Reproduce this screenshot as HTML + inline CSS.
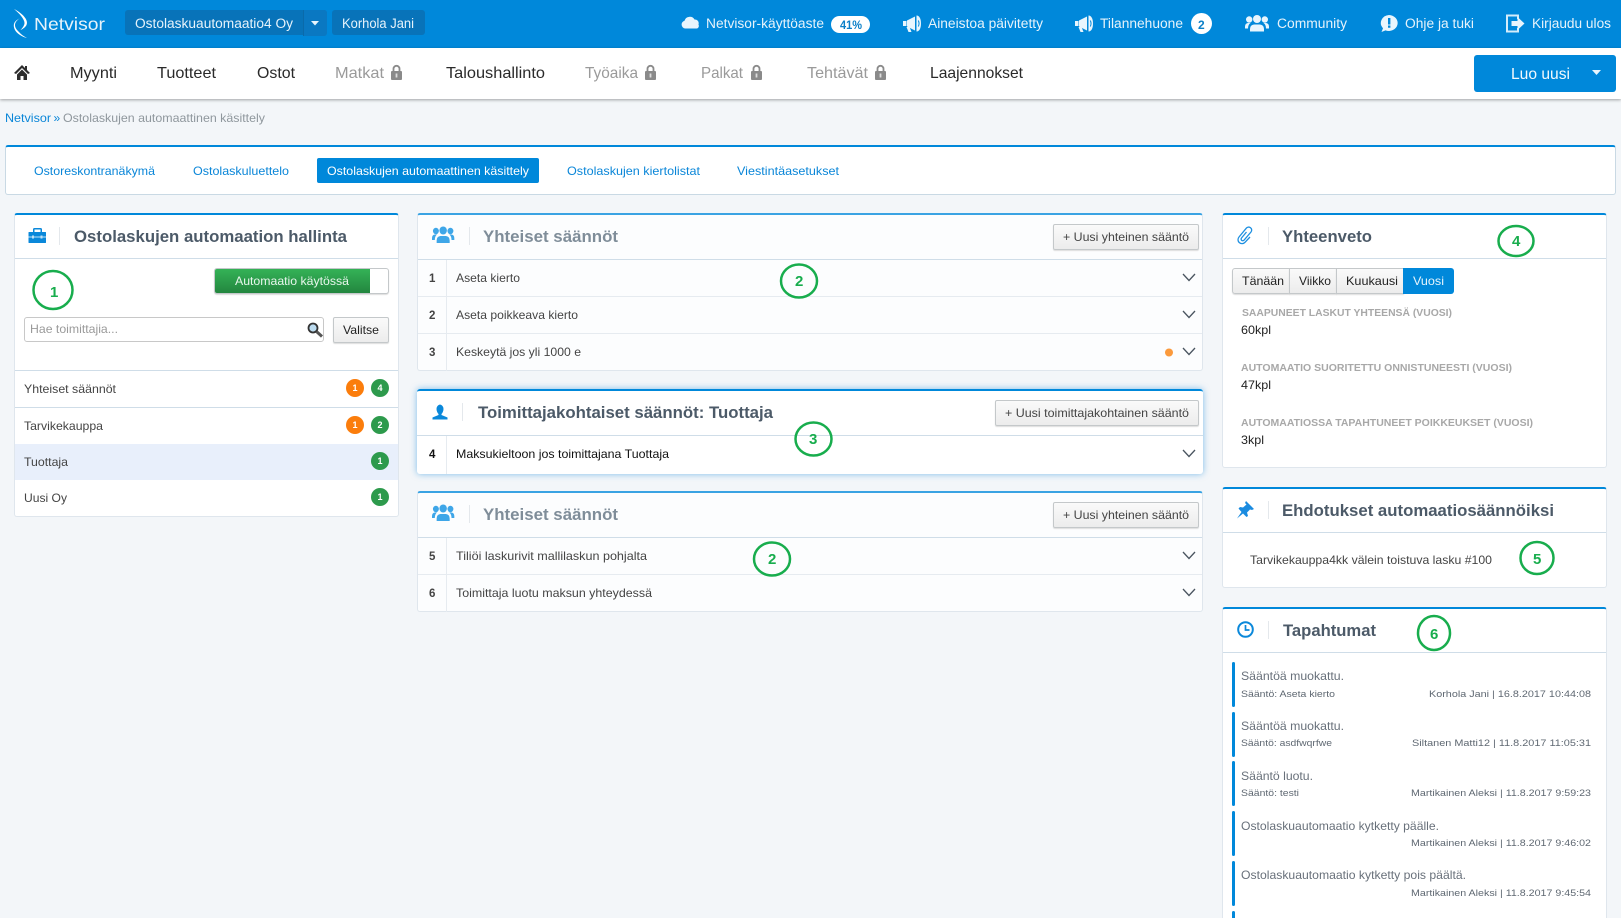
<!DOCTYPE html>
<html lang="fi"><head><meta charset="utf-8"><title>Ostolaskujen automaattinen käsittely</title>
<style>
html,body{margin:0;padding:0;width:1621px;height:918px;overflow:hidden;background:#f3f6f9}
body{position:relative;font-family:"Liberation Sans",sans-serif}
.b{position:absolute;box-sizing:border-box}
.p{background:#fff;border:1px solid #dfe6ed;border-top:2px solid #0088da;border-radius:3px}
.p2{border-top-color:#3aa3e3;background:#fcfdfe}
.hl{position:absolute;left:0;right:0;height:1px;background:#cfdde8}
.rl{position:absolute;left:0;right:0;height:1px;background:#e6ebf0}
.btn{background:linear-gradient(#fafafa,#ececec);border:1px solid #c4c8ca;border-radius:2px;box-shadow:0 1px 1px #ddd}
svg{position:absolute;left:0;top:0}
text{font-family:"Liberation Sans",sans-serif;font-size:12px;fill:#333}
.w{fill:#e6f3fb;font-size:13.5px}
.n{font-size:16px;fill:#2a2a2a}.g{font-size:16px;fill:#9a9a9a}
.t{font-size:17px;font-weight:bold;fill:#4c5a68}
.tg{font-size:17px;font-weight:bold;fill:#7f8d99}
.l{fill:#0a86d8}
.lb{font-size:10.5px;font-weight:bold;fill:#a8a8a8}
.e{fill:#68707a}.e2{font-size:9.5px;fill:#5f6872}
.c{font-size:15px;font-weight:bold;fill:#18ad4d}
.r{fill:#444}
.bw{font-size:9px;font-weight:bold;fill:#fff}
.k{fill:#222}
</style></head><body>
<div class="b" style="left:0;top:0;width:1621px;height:48px;background:#0088da"></div>
<div class="b" style="left:0;top:48px;width:1621px;height:51px;background:#fff;box-shadow:0 1px 3px rgba(0,0,0,.35)"></div>
<div class="b" style="left:125px;top:10px;width:202px;height:25px;background:#0873b9;border-radius:3px"></div>
<div class="b" style="left:303px;top:10px;width:24px;height:26px;background:#0a78c2;border-left:1px solid #0a6aaa;border-radius:0 3px 3px 0"></div>
<div class="b" style="left:332px;top:10px;width:93px;height:25px;background:#0873b9;border-radius:3px"></div>
<div class="b" style="left:831px;top:16px;width:39px;height:17px;background:#fff;border-radius:9px"></div>
<div class="b" style="left:1191px;top:13px;width:21px;height:21px;background:#fff;border-radius:50%"></div>
<div class="b" style="left:1474px;top:55px;width:142px;height:37px;background:#0088da;border-radius:3px"></div>

<div class="b" style="left:5px;top:145px;width:1611px;height:50px;background:#fff;border:1px solid #c9d9e4;border-top:2px solid #0088da;border-radius:3px"></div>
<div class="b" style="left:317px;top:158px;width:222px;height:25px;background:#0088da;border-radius:2px"></div>

<!-- left -->
<div class="b p" style="left:14px;top:213px;width:385px;height:304px">
  <div class="hl" style="top:43px"></div>
  <div class="hl" style="top:155px"></div>
  <div class="hl" style="top:192px"></div>
  <div class="b" style="left:0;right:0;top:229px;height:36px;background:#e8effb"></div>
</div>
<div class="b" style="left:214px;top:268px;width:175px;height:26px;background:#fff;border:1px solid #c4c8ca;border-radius:3px;box-shadow:0 1px 1px #ddd"></div>
<div class="b" style="left:215px;top:269px;width:155px;height:24px;background:linear-gradient(#34b257,#23863f);border-radius:2px 0 0 2px"></div>
<div class="b" style="left:24px;top:317px;width:300px;height:25px;background:#fff;border:1px solid #c8c8c8;border-radius:3px"></div>
<div class="b btn" style="left:333px;top:317px;width:56px;height:26px"></div>

<!-- middle -->
<div class="b p p2" style="left:417px;top:213px;width:786px;height:158px">
  <div class="hl" style="top:44px"></div>
  <div class="rl" style="top:81px"></div>
  <div class="rl" style="top:118px"></div>
  <div class="b" style="left:28px;top:45px;width:1px;height:111px;background:#e6ebf0"></div>
</div>
<div class="b" style="left:417px;top:389px;width:786px;height:85px;background:#fff;border-top:2px solid #0088da;border-radius:3px;box-shadow:0 0 7px rgba(30,140,220,.55)">
  <div class="hl" style="top:44px"></div>
  <div class="b" style="left:29px;top:45px;width:1px;height:38px;background:#e6ebf0"></div>
</div>
<div class="b p p2" style="left:417px;top:491px;width:786px;height:121px">
  <div class="hl" style="top:44px"></div>
  <div class="rl" style="top:81px"></div>
  <div class="b" style="left:28px;top:45px;width:1px;height:74px;background:#e6ebf0"></div>
</div>
<div class="b btn" style="left:1053px;top:224px;width:146px;height:26px"></div>
<div class="b btn" style="left:995px;top:400px;width:204px;height:26px"></div>
<div class="b btn" style="left:1053px;top:502px;width:146px;height:26px"></div>

<!-- right -->
<div class="b p" style="left:1222px;top:213px;width:385px;height:255px"><div class="hl" style="top:43px"></div></div>
<div class="b btn" style="left:1232px;top:268px;width:58px;height:26px;border-radius:3px 0 0 3px"></div>
<div class="b btn" style="left:1289px;top:268px;width:48px;height:26px;border-radius:0"></div>
<div class="b btn" style="left:1336px;top:268px;width:68px;height:26px;border-radius:0"></div>
<div class="b" style="left:1403px;top:268px;width:51px;height:26px;background:#0088da;border-radius:0 3px 3px 0"></div>
<div class="b p" style="left:1222px;top:487px;width:385px;height:101px"><div class="hl" style="top:43px"></div></div>
<div class="b p" style="left:1222px;top:607px;width:385px;height:320px"><div class="hl" style="top:43px"></div></div>
<div class="b" style="left:1232px;top:662px;width:3px;height:45px;background:#0088da;border-radius:2px"></div>
<div class="b" style="left:1232px;top:712px;width:3px;height:45px;background:#0088da;border-radius:2px"></div>
<div class="b" style="left:1232px;top:761px;width:3px;height:45px;background:#0088da;border-radius:2px"></div>
<div class="b" style="left:1232px;top:811px;width:3px;height:45px;background:#0088da;border-radius:2px"></div>
<div class="b" style="left:1232px;top:861px;width:3px;height:45px;background:#0088da;border-radius:2px"></div>
<div class="b" style="left:1232px;top:911px;width:3px;height:10px;background:#0088da;border-radius:2px"></div>

<svg width="1621" height="918" viewBox="0 0 1621 918" xmlns="http://www.w3.org/2000/svg">
<defs>
 <g id="lock"><rect x="0" y="6" width="11" height="9" rx="1" fill="#8a8a8a"/><path d="M2.5 6V3.8a3 3 0 0 1 6 0V6" fill="none" stroke="#8a8a8a" stroke-width="1.8"/><rect x="4.6" y="8.5" width="1.8" height="4" fill="#ddd"/></g>
 <g id="mega" fill="#e8f5fd"><path d="M4 5.500 L12 1.500 V15.500 L4 11.500Z"/><path d="M0 6h3.500v5H0z"/><path d="M3.500 12h3l2 5H5.500z"/><path d="M13.500 .5c3 0 4.500 3.500 4.500 8s-1.500 8-4.500 8z"/><path d="M15.300 5.500q1.500 3 0 6" fill="none" stroke="#0088da" stroke-width="1"/></g>
 <g id="users"><circle cx="12" cy="4.500" r="4"/><path d="M5 17v-2.500q0-4 4-4.500h6q4 .5 4 4.500V17z"/><circle cx="4.200" cy="5" r="3.200"/><path d="M0 14v-2q0-3 3-3.500h2.500q-2.500 1.500-2.500 5.500z"/><circle cx="19.800" cy="5" r="3.200"/><path d="M24 14v-2q0-3-3-3.500h-2.500q2.500 1.500 2.500 5.500z"/></g>
 <path id="chev" d="M0 0 L6 6.500 L12 0" fill="none" stroke="#4a5560" stroke-width="1.300"/>
</defs>

<!-- logo -->
<g fill="#fff"><path d="M14 9 C22 13 29 20 26.500 25 C25.500 27 23 29 20.500 30 C23 27.500 24.500 25 24.500 23 C24.500 19 19 13 14 9Z"/><path d="M22 17 C18 19 15 22 15 25 C15 28 17 30 19 32 C21 34.500 24 36.500 27 38 C22 37 16 33 14.500 29 C13 25 14 22 17 20 C18.500 19 20 18 22 17Z"/></g>
<text x="34" y="30" class="w" style="font-size:17.500px" textLength="71" lengthAdjust="spacingAndGlyphs">Netvisor</text>

<text x="135" y="28" class="w" textLength="158" lengthAdjust="spacingAndGlyphs">Ostolaskuautomaatio4 Oy</text>
<path d="M311 21h8l-4 4.500z" fill="#e8f5fd"/>
<text x="342" y="28" class="w" textLength="72" lengthAdjust="spacingAndGlyphs">Korhola Jani</text>

<path d="M686 29a4 4 0 0 1-.5-7.800 5.500 5.500 0 0 1 10-1.200 3.800 3.800 0 0 1 4 5 2.700 2.700 0 0 1-1.500 4z" fill="#e8f5fd" transform="translate(-1 -.5)"/>
<text x="706" y="28" class="w" textLength="118" lengthAdjust="spacingAndGlyphs">Netvisor-käyttöaste</text>
<text x="840" y="29" style="font-size:12px;font-weight:bold;fill:#0a7fc8" textLength="22" lengthAdjust="spacingAndGlyphs">41%</text>
<use href="#mega" x="903" y="15"/>
<text x="928" y="28" class="w" textLength="115" lengthAdjust="spacingAndGlyphs">Aineistoa päivitetty</text>
<use href="#mega" x="1075" y="15"/>
<text x="1100" y="28" class="w" textLength="83" lengthAdjust="spacingAndGlyphs">Tilannehuone</text>
<text x="1198" y="29" style="font-size:12px;font-weight:bold;fill:#0a7fc8">2</text>
<use href="#users" x="1245" y="14.500" fill="#e8f5fd"/>
<text x="1277" y="28" class="w" textLength="70" lengthAdjust="spacingAndGlyphs">Community</text>
<path d="M1389 15a8.800 8 0 1 1-3.500 15.400l-4 1.600 1.500-3.800A8.800 8 0 0 1 1389 15z" fill="#e8f5fd"/>
<path d="M1388 18h2.400v6.500h-2.400zM1388 25.500h2.400v2.300h-2.400z" fill="#0088da"/>
<text x="1405" y="28" class="w" textLength="69" lengthAdjust="spacingAndGlyphs">Ohje ja tuki</text>
<path d="M1518 19v-3.500h-11v16h11V28" fill="none" stroke="#d4ecfa" stroke-width="2"/>
<path d="M1511.500 21h6v-4l7 6.500-7 6.500v-4h-6z" fill="#e8f5fd"/>
<text x="1532" y="28" class="w" textLength="79" lengthAdjust="spacingAndGlyphs">Kirjaudu ulos</text>

<!-- nav -->
<path d="M22 65 L14 73 L16 74 L22 68 L28 74 L30 73 L27 70 V66 H25 V68z" fill="#2d2d2d"/><path d="M17 74.500 L22 69.500 L27 74.500 V80 H23.500 V76 H20.500 V80 H17z" fill="#2d2d2d"/>
<g style="font-size:16px">
<text x="70" y="78" class="n" textLength="47" lengthAdjust="spacingAndGlyphs">Myynti</text>
<text x="157" y="78" class="n" textLength="59" lengthAdjust="spacingAndGlyphs">Tuotteet</text>
<text x="257" y="78" class="n" textLength="38" lengthAdjust="spacingAndGlyphs">Ostot</text>
<text x="335" y="78" class="g" textLength="49" lengthAdjust="spacingAndGlyphs">Matkat</text>
<use href="#lock" x="391" y="65"/>
<text x="446" y="78" class="n" textLength="99" lengthAdjust="spacingAndGlyphs">Taloushallinto</text>
<text x="585" y="78" class="g" textLength="53" lengthAdjust="spacingAndGlyphs">Työaika</text>
<use href="#lock" x="645" y="65"/>
<text x="701" y="78" class="g" textLength="42" lengthAdjust="spacingAndGlyphs">Palkat</text>
<use href="#lock" x="751" y="65"/>
<text x="807" y="78" class="g" textLength="61" lengthAdjust="spacingAndGlyphs">Tehtävät</text>
<use href="#lock" x="875" y="65"/>
<text x="930" y="78" class="n" textLength="93" lengthAdjust="spacingAndGlyphs">Laajennokset</text>
</g>
<text x="1511" y="79" style="font-size:15.500px;fill:#f2f9fd" textLength="59" lengthAdjust="spacingAndGlyphs">Luo uusi</text>
<path d="M1592 70h9l-4.500 5z" fill="#e8f5fd"/>

<!-- breadcrumb & tabs -->
<text x="5" y="122" class="l" textLength="46" lengthAdjust="spacingAndGlyphs">Netvisor</text>
<text x="53.500" y="122" class="l">»</text>
<text x="63" y="122" style="fill:#8f979d" textLength="202" lengthAdjust="spacingAndGlyphs">Ostolaskujen automaattinen käsittely</text>
<text x="34" y="175" class="l" textLength="121" lengthAdjust="spacingAndGlyphs">Ostoreskontranäkymä</text>
<text x="193" y="175" class="l" textLength="96" lengthAdjust="spacingAndGlyphs">Ostolaskuluettelo</text>
<text x="327" y="175" style="fill:#fff" textLength="202" lengthAdjust="spacingAndGlyphs">Ostolaskujen automaattinen käsittely</text>
<text x="567" y="175" class="l" textLength="133" lengthAdjust="spacingAndGlyphs">Ostolaskujen kiertolistat</text>
<text x="737" y="175" class="l" textLength="102" lengthAdjust="spacingAndGlyphs">Viestintäasetukset</text>

<!-- left panel -->
<g fill="#0a88da"><path d="M33 232v-2.500q0-1.500 1.500-1.500h6q1.500 0 1.500 1.500V232h-1.500v-2.500h-6V232z"/><rect x="28.500" y="232" width="17.500" height="11" rx=".5"/></g>
<rect x="28.500" y="236.500" width="17.500" height="1" fill="#bfe2f7"/><rect x="32" y="235.500" width="2" height="3" fill="#bfe2f7"/><rect x="40.500" y="235.500" width="2" height="3" fill="#bfe2f7"/>
<rect x="59" y="227" width="1" height="18" fill="#e4e8ec"/>
<text x="74" y="242" class="t" textLength="273" lengthAdjust="spacingAndGlyphs">Ostolaskujen automaation hallinta</text>
<text x="235" y="285" style="fill:#e8f6ec" textLength="114" lengthAdjust="spacingAndGlyphs">Automaatio käytössä</text>
<text x="30" y="333" style="fill:#9a9a9a" textLength="88" lengthAdjust="spacingAndGlyphs">Hae toimittajia...</text>
<circle cx="313" cy="328" r="4.500" fill="#bcdcf0" stroke="#333" stroke-width="1.800"/><path d="M316.500 331.500 L322 336.500" stroke="#555" stroke-width="3"/>
<text x="343" y="334" class="k" textLength="36" lengthAdjust="spacingAndGlyphs">Valitse</text>
<text x="24" y="393" class="r" textLength="92" lengthAdjust="spacingAndGlyphs">Yhteiset säännöt</text>
<text x="24" y="430" class="r" textLength="79" lengthAdjust="spacingAndGlyphs">Tarvikekauppa</text>
<text x="24" y="466" class="r" textLength="44" lengthAdjust="spacingAndGlyphs">Tuottaja</text>
<text x="24" y="502" class="r" textLength="43" lengthAdjust="spacingAndGlyphs">Uusi Oy</text>
<g fill="#fb7d0c"><circle cx="355" cy="388" r="9"/><circle cx="355" cy="425" r="9"/></g>
<g fill="#2d9a4c"><circle cx="380" cy="388" r="9"/><circle cx="380" cy="425" r="9"/><circle cx="380" cy="461" r="9"/><circle cx="380" cy="497" r="9"/></g>
<g>
<text x="352.500" y="391" class="bw">1</text><text x="352.500" y="428" class="bw">1</text>
<text x="377.500" y="391" class="bw">4</text><text x="377.500" y="428" class="bw">2</text><text x="377.500" y="464" class="bw">1</text><text x="377.500" y="500" class="bw">1</text>
</g>

<!-- middle panel -->
<use href="#users" transform="translate(432 226) scale(.93 1)" fill="#3ea6e8"/>
<rect x="469" y="227" width="1" height="18" fill="#e4e8ec"/>
<text x="483" y="242" class="tg" textLength="135" lengthAdjust="spacingAndGlyphs">Yhteiset säännöt</text>
<text x="1063" y="241" class="r" textLength="126" lengthAdjust="spacingAndGlyphs">+ Uusi yhteinen sääntö</text>
<text x="429" y="282" style="fill:#444;font-weight:bold;font-size:11.500px">1</text>
<text x="429" y="319" style="fill:#444;font-size:11.500px;font-weight:bold">2</text>
<text x="429" y="356" style="fill:#444;font-size:11.500px;font-weight:bold">3</text>
<text x="456" y="282" class="r" textLength="64" lengthAdjust="spacingAndGlyphs">Aseta kierto</text>
<text x="456" y="319" class="r" textLength="122" lengthAdjust="spacingAndGlyphs">Aseta poikkeava kierto</text>
<text x="456" y="356" class="r" textLength="125" lengthAdjust="spacingAndGlyphs">Keskeytä jos yli 1000 e</text>
<use href="#chev" x="1183" y="274"/><use href="#chev" x="1183" y="311"/><use href="#chev" x="1183" y="348"/>
<circle cx="1169" cy="352.500" r="4" fill="#fb9a3c"/>

<path d="M441 404.500a4 4.500 0 0 1 3.500 4.500c0 2-1 4-2 5v1l6 2.500v2h-15v-2l6-2.500v-1c-1-1-2-3-2-5a4 4.500 0 0 1 3.500-4.500z" fill="#0a88da" transform="translate(-1 0)"/>
<rect x="462" y="403" width="1" height="18" fill="#e4e8ec"/>
<text x="478" y="418" class="t" textLength="295" lengthAdjust="spacingAndGlyphs">Toimittajakohtaiset säännöt: Tuottaja</text>
<text x="1005" y="417" class="r" textLength="184" lengthAdjust="spacingAndGlyphs">+ Uusi toimittajakohtainen sääntö</text>
<text x="429" y="458" style="fill:#111;font-weight:bold;font-size:11.500px">4</text>
<text x="456" y="458" style="fill:#111" textLength="213" lengthAdjust="spacingAndGlyphs">Maksukieltoon jos toimittajana Tuottaja</text>
<use href="#chev" x="1183" y="450"/>

<use href="#users" transform="translate(432 504) scale(.93 1)" fill="#3ea6e8"/>
<rect x="469" y="505" width="1" height="18" fill="#e4e8ec"/>
<text x="483" y="520" class="tg" textLength="135" lengthAdjust="spacingAndGlyphs">Yhteiset säännöt</text>
<text x="1063" y="519" class="r" textLength="126" lengthAdjust="spacingAndGlyphs">+ Uusi yhteinen sääntö</text>
<text x="429" y="560" style="fill:#444;font-weight:bold;font-size:11.500px">5</text>
<text x="429" y="597" style="fill:#444;font-weight:bold;font-size:11.500px">6</text>
<text x="456" y="560" class="r" textLength="191" lengthAdjust="spacingAndGlyphs">Tiliöi laskurivit mallilaskun pohjalta</text>
<text x="456" y="597" class="r" textLength="196" lengthAdjust="spacingAndGlyphs">Toimittaja luotu maksun yhteydessä</text>
<use href="#chev" x="1183" y="552"/><use href="#chev" x="1183" y="589"/>

<!-- right panels -->
<path d="M1246.500 232 L1241.500 238 a1.600 1.600 0 0 0 2.500 2.200 L1251 232 a3 3 0 0 0-4.700-3.800 L1239 237 a4 4 0 0 0 6 5.300 L1250 237" fill="none" stroke="#1d8fe0" stroke-width="1.300"/>
<rect x="1268" y="227" width="1" height="18" fill="#e4e8ec"/>
<text x="1282" y="242" class="t" textLength="90" lengthAdjust="spacingAndGlyphs">Yhteenveto</text>
<text x="1242" y="285" class="k" textLength="42" lengthAdjust="spacingAndGlyphs">Tänään</text>
<text x="1299" y="285" class="k" textLength="32" lengthAdjust="spacingAndGlyphs">Viikko</text>
<text x="1346" y="285" class="k" textLength="52" lengthAdjust="spacingAndGlyphs">Kuukausi</text>
<text x="1413" y="285" style="fill:#e6f4fc" textLength="31" lengthAdjust="spacingAndGlyphs">Vuosi</text>
<text x="1242" y="316" class="lb" textLength="210" lengthAdjust="spacingAndGlyphs">SAAPUNEET LASKUT YHTEENSÄ (VUOSI)</text>
<text x="1241" y="334" class="k" textLength="30" lengthAdjust="spacingAndGlyphs">60kpl</text>
<text x="1241" y="371" class="lb" textLength="271" lengthAdjust="spacingAndGlyphs">AUTOMAATIO SUORITETTU ONNISTUNEESTI (VUOSI)</text>
<text x="1241" y="389" class="k" textLength="30" lengthAdjust="spacingAndGlyphs">47kpl</text>
<text x="1241" y="426" class="lb" textLength="292" lengthAdjust="spacingAndGlyphs">AUTOMAATIOSSA TAPAHTUNEET POIKKEUKSET (VUOSI)</text>
<text x="1241" y="444" class="k" textLength="23" lengthAdjust="spacingAndGlyphs">3kpl</text>

<path d="M1246 501 L1254 509 L1252 510 L1250 509.500 L1247 512.500 L1248 516 L1246.500 517 L1243 513.500 L1237 518.500 L1241.500 512 L1238.500 508.500 L1240 507 L1243 507.500 L1246.500 504.500 L1245 503z" fill="#1a8be0"/>
<rect x="1268" y="501" width="1" height="18" fill="#e4e8ec"/>
<text x="1282" y="516" class="t" textLength="272" lengthAdjust="spacingAndGlyphs">Ehdotukset automaatiosäännöiksi</text>
<text x="1250" y="564" class="r" textLength="242" lengthAdjust="spacingAndGlyphs">Tarvikekauppa4kk välein toistuva lasku #100</text>

<circle cx="1245.500" cy="629.500" r="7.300" fill="none" stroke="#0a88da" stroke-width="2"/><path d="M1245.500 625v5h4" fill="none" stroke="#0a88da" stroke-width="1.700"/>
<rect x="1268" y="621" width="1" height="18" fill="#e4e8ec"/>
<text x="1283" y="636" class="t" textLength="93" lengthAdjust="spacingAndGlyphs">Tapahtumat</text>

<text x="1241" y="680" class="e" textLength="103" lengthAdjust="spacingAndGlyphs">Sääntöä muokattu.</text>
<text x="1241" y="697" class="e2" textLength="94" lengthAdjust="spacingAndGlyphs">Sääntö: Aseta kierto</text>
<text x="1429" y="697" class="e2" textLength="162" lengthAdjust="spacingAndGlyphs">Korhola Jani | 16.8.2017 10:44:08</text>
<text x="1241" y="730" class="e" textLength="103" lengthAdjust="spacingAndGlyphs">Sääntöä muokattu.</text>
<text x="1241" y="746" class="e2" textLength="91" lengthAdjust="spacingAndGlyphs">Sääntö: asdfwqrfwe</text>
<text x="1412" y="746" class="e2" textLength="179" lengthAdjust="spacingAndGlyphs">Siltanen Matti12 | 11.8.2017 11:05:31</text>
<text x="1241" y="780" class="e" textLength="72" lengthAdjust="spacingAndGlyphs">Sääntö luotu.</text>
<text x="1241" y="796" class="e2" textLength="58" lengthAdjust="spacingAndGlyphs">Sääntö: testi</text>
<text x="1411" y="796" class="e2" textLength="180" lengthAdjust="spacingAndGlyphs">Martikainen Aleksi | 11.8.2017 9:59:23</text>
<text x="1241" y="830" class="e" textLength="198" lengthAdjust="spacingAndGlyphs">Ostolaskuautomaatio kytketty päälle.</text>
<text x="1411" y="846" class="e2" textLength="180" lengthAdjust="spacingAndGlyphs">Martikainen Aleksi | 11.8.2017 9:46:02</text>
<text x="1241" y="879" class="e" textLength="225" lengthAdjust="spacingAndGlyphs">Ostolaskuautomaatio kytketty pois päältä.</text>
<text x="1411" y="896" class="e2" textLength="180" lengthAdjust="spacingAndGlyphs">Martikainen Aleksi | 11.8.2017 9:45:54</text>

<!-- annotation circles -->
<g fill="none" stroke="#18ad4d" stroke-width="2.500">
<ellipse cx="53" cy="290" rx="19.500" ry="19"/>
<ellipse cx="799" cy="281" rx="18" ry="16.500"/>
<ellipse cx="813.500" cy="439" rx="18" ry="16.500"/>
<ellipse cx="772" cy="559" rx="18" ry="16.500"/>
<ellipse cx="1516" cy="241" rx="17.500" ry="15"/>
<ellipse cx="1537" cy="558" rx="16.500" ry="16"/>
<ellipse cx="1434" cy="633" rx="16" ry="17"/>
</g>
<text x="50" y="297" class="c">1</text>
<text x="795" y="286" class="c">2</text>
<text x="809" y="444" class="c">3</text>
<text x="768" y="564" class="c">2</text>
<text x="1512" y="246" class="c">4</text>
<text x="1533" y="564" class="c">5</text>
<text x="1430" y="639" class="c">6</text>
</svg>
</body></html>
